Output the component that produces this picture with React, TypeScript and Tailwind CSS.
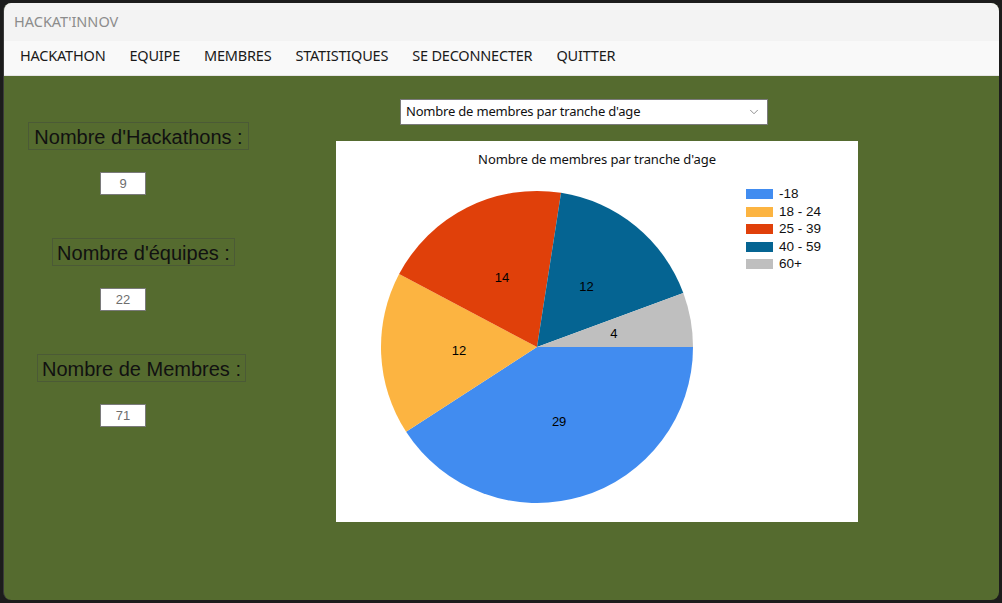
import { ChevronDown } from 'lucide-react';

type Slice = { label: string; value: number; color: string };

const slices: Slice[] = [
  { label: '-18', value: 29, color: '#418cf0' },
  { label: '18 - 24', value: 12, color: '#fcb441' },
  { label: '25 - 39', value: 14, color: '#e0400a' },
  { label: '40 - 59', value: 12, color: '#056492' },
  { label: '60+', value: 4, color: '#bfbfbf' },
];

const menu = ['HACKATHON', 'EQUIPE', 'MEMBRES', 'STATISTIQUES', 'SE DECONNECTER', 'QUITTER'];

const stats = [
  { label: "Nombre d'Hackathons :", value: '9', ml: 'ml-[24px]', w: 'w-[221px]', mt: 'mt-[46px]' },
  { label: "Nombre d'équipes :", value: '22', ml: 'ml-[48px]', w: 'w-[183px]', mt: 'mt-[43px]' },
  { label: 'Nombre de Membres :', value: '71', ml: 'ml-[33px]', w: 'w-[209px]', mt: 'mt-[43px]' },
];

function PieChart() {
  const cx = 158;
  const cy = 158;
  const r = 156;
  const total = slices.reduce((s, x) => s + x.value, 0);
  let start = 0;

  return (
    <svg width={316} height={316} viewBox="0 0 316 316">
      {slices.map((s) => {
        const a0 = (start / total) * Math.PI * 2;
        start += s.value;
        const a1 = (start / total) * Math.PI * 2;
        const mid = (a0 + a1) / 2;
        const large = a1 - a0 > Math.PI ? 1 : 0;
        const x0 = cx + r * Math.cos(a0);
        const y0 = cy + r * Math.sin(a0);
        const x1 = cx + r * Math.cos(a1);
        const y1 = cy + r * Math.sin(a1);
        const lx = cx + 78 * Math.cos(mid);
        const ly = cy + 78 * Math.sin(mid);
        return (
          <g key={s.label}>
            <path
              d={`M${cx},${cy} L${x0},${y0} A${r},${r} 0 ${large} 1 ${x1},${y1} Z`}
              fill={s.color}
            />
            <text
              x={lx}
              y={ly}
              textAnchor="middle"
              dominantBaseline="central"
              fontSize={13}
              fill="#000"
              style={{ fontFamily: '"Liberation Sans", Arial, sans-serif' }}
            >
              {s.value}
            </text>
          </g>
        );
      })}
    </svg>
  );
}

export default function App() {
  return (
    <div className="w-[1002px] h-[603px] bg-[#1c1c1c] p-[3px] overflow-hidden">
      <div className="h-full w-full rounded-lg overflow-hidden flex flex-col bg-[#556b2f] border-l border-[#3a3a3a]">
        {/* title bar */}
        <div className="h-[38px] shrink-0 bg-[#f3f3f3] flex items-center pl-[10px]">
          <span className="text-[14.5px] text-[#8c8c8c] font-['Noto_Sans',sans-serif]">
            HACKAT'INNOV
          </span>
        </div>

        {/* menu */}
        <div className="h-[35px] shrink-0 bg-[#f9f9f9] border-b border-[#e6e6e6] flex items-center pl-[16px] pb-[5px] gap-[24px]">
          {menu.map((m) => (
            <span
              key={m}
              className="text-[14.5px] text-[#1a1a1a] font-['Noto_Sans',sans-serif] tracking-[-0.2px]"
            >
              {m}
            </span>
          ))}
        </div>

        {/* content */}
        <div className="flex-1 flex">
          <div className="w-[332px] shrink-0 flex flex-col items-start">
            {stats.map((s) => (
              <div key={s.label} className="flex flex-col items-start">
                <div
                  className={`${s.mt} ${s.ml} ${s.w} h-[28px] pt-[2px] border border-[#4b5a36] flex items-center justify-center text-[20px] text-[#111] font-['Liberation_Sans',Arial,sans-serif]`}
                >
                  {s.label}
                </div>
                <div className="mt-[22px] ml-[96px] w-[46px] h-[23px] bg-white border border-[#7a7a7a] flex items-center justify-center text-[13px] text-[#6d6d6d] font-['Liberation_Sans',Arial,sans-serif]">
                  {s.value}
                </div>
              </div>
            ))}
          </div>

          <div className="flex flex-col items-start">
            <div className="mt-[23px] ml-[64px] w-[368px] h-[26px] bg-white border border-[#7a7a7a] flex items-center justify-between pl-[5px] pr-[6px]">
              <span className="text-[13px] text-[#111] font-['Noto_Sans',sans-serif] tracking-[-0.2px]">
                Nombre de membres par tranche d'age
              </span>
              <ChevronDown size={14} strokeWidth={1.4} className="text-[#777]" />
            </div>

            <div className="mt-[16px] w-[522px] h-[381px] bg-white flex flex-col">
              <div className="pt-[9px] text-center text-[13px] text-[#111] font-['Noto_Sans',sans-serif] tracking-[-0.1px]">
                Nombre de membres par tranche d'age
              </div>
              <div className="flex items-start mt-[19px]">
                <div className="ml-[43px]">
                  <PieChart />
                </div>
                <div className="ml-[51px] mt-0 flex flex-col gap-[6.5px]">
                  {slices.map((s) => (
                    <div key={s.label} className="flex items-center h-[11px]">
                      <span className="w-[27px] h-[10px]" style={{ backgroundColor: s.color }} />
                      <span className="ml-[6px] text-[13.5px] leading-none text-[#111] font-['Liberation_Sans',Arial,sans-serif]">
                        {s.label}
                      </span>
                    </div>
                  ))}
                </div>
              </div>
            </div>
          </div>
        </div>
      </div>
    </div>
  );
}
